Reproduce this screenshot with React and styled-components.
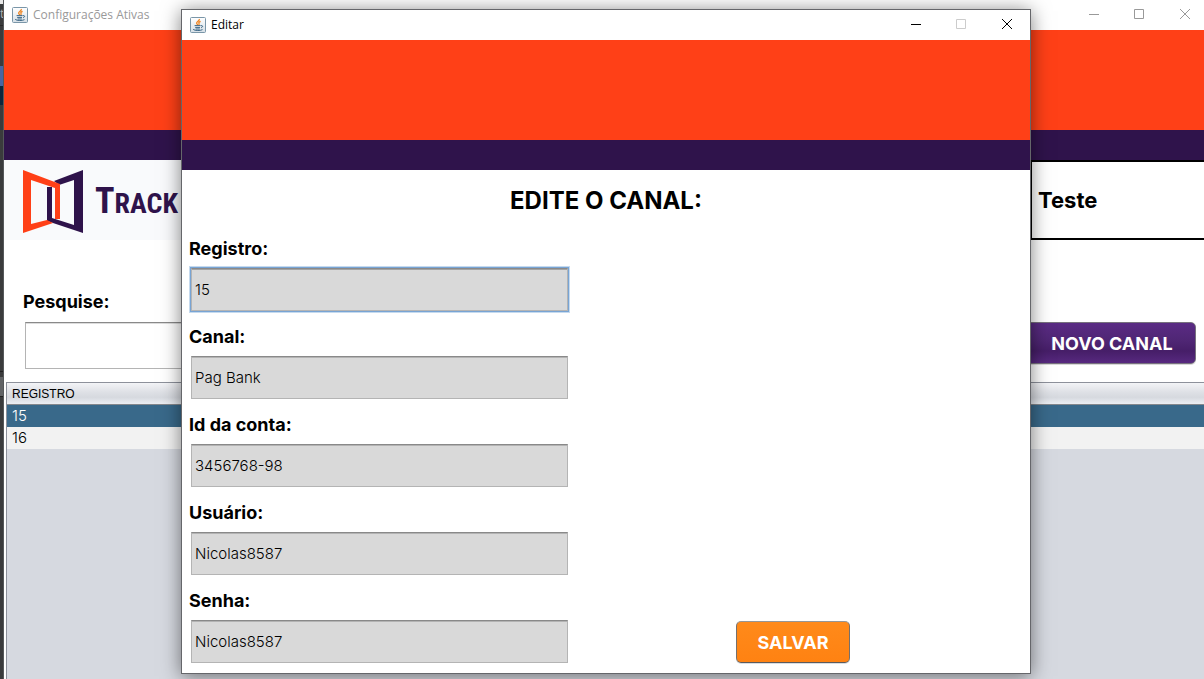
import React from "react";
import styled, { createGlobalStyle, css } from "styled-components";

const GlobalStyle = createGlobalStyle`
  *, *::before, *::after { box-sizing: border-box; }
  body {
    margin: 0;
    background: #ffffff;
    color: #000000;
    font-family: Inter, "Liberation Sans", sans-serif;
  }
`;

const Desktop = styled.div`
  position: relative;
  display: flex;
  min-height: 100vh;
  overflow: hidden;
`;

const DesktopEdge = styled.div`
  flex: 0 0 4px;
  overflow: hidden;
  display: flex;
  flex-direction: column;
  background: #3a3b3c;
  border-right: 1px solid #55585a;
  color: #b0b0b0;
  font: 12px/20px "Open Sans", sans-serif;
`;

const EdgePiece = styled.div`
  flex: 0 0 ${(p) => p.$size}px;
  background: ${(p) => p.$color || "transparent"};
`;

const MainWindow = styled.main`
  flex: 1;
  min-width: 0;
  display: flex;
  flex-direction: column;
  background: #ffffff;
`;

const TitleBar = styled.header`
  display: flex;
  align-items: center;
  height: 30px;
  padding: 0 ${(p) => (p.$active ? 15 : 11)}px 0 8px;
  background: #ffffff;
  color: ${(p) => (p.$active ? "#000000" : "#999999")};
`;

const WindowTitle = styled.span`
  flex: 1;
  margin-left: 5px;
  font: 12px/16px "Open Sans", "Noto Sans", sans-serif;
`;

const WindowButtons = styled.div`
  display: flex;
  gap: 31px;
`;

const WindowButton = styled.button`
  display: flex;
  padding: 0;
  border: 0;
  background: none;
  color: inherit;
  &:disabled { color: #cccccc; }
`;

const OrangeBand = styled.div`
  height: 100px;
  background: #ff4017;
`;

const PurpleBand = styled.div`
  height: 30px;
  background: #2f134b;
`;

const BrandRow = styled.div`
  display: flex;
  justify-content: space-between;
  height: 80px;
`;

const Brand = styled.div`
  display: flex;
  align-items: center;
  width: 300px;
  padding: 4px 0 0 18px;
  background: #f9fafc;
  svg { flex: none; }
`;

const BrandName = styled.span`
  margin-left: 11px;
  color: #2f134b;
  font: 700 36px/44px "Roboto Condensed", Roboto, sans-serif;
  small { font-size: 28px; }
`;

const UserBox = styled.div`
  display: flex;
  align-items: center;
  width: 180px;
  margin-right: -6px;
  padding-left: 6px;
  border: 2px solid #000000;
  font-size: 22px;
  font-weight: 700;
`;

const SearchRow = styled.div`
  display: flex;
  align-items: flex-end;
  justify-content: space-between;
  padding: 50px 8px 13px 19px;
`;

const SearchField = styled.div`
  display: flex;
  flex-direction: column;
  gap: 8px;
  width: 50%;
`;

const Label = styled.label`
  font-size: 18px;
  line-height: 24px;
  font-weight: 700;
`;

const TextInput = styled.input`
  width: calc(100% - 4px);
  margin: 0 2px;
  height: ${(p) => (p.$plain ? 47 : 43)}px;
  padding: 0 3px;
  border: 1px solid #b4b4b4;
  border-top-color: #898989;
  border-radius: 0;
  outline: 0;
  background: ${(p) => (p.$plain ? "#ffffff" : "#d9d9d9")};
  box-shadow: inset 0 1px 0 ${(p) => (p.$plain ? "#dcdcdc" : "#b3b3b3")};
  color: #000000;
  font: 300 15px/20px Inter, sans-serif;
  ${(p) =>
    p.$focused &&
    css`
      box-shadow: inset 0 1px 0 #a4a4a4, 0 0 0 1px #78a4d4, 0 0 0 2px #c6daee;
    `}
`;

const Button = styled.button`
  flex: none;
  height: 42px;
  padding: 2px 0 0;
  border: 1px solid;
  border-radius: 5px;
  color: #ffffff;
  font: 700 18px/24px Inter, sans-serif;
`;

const NewButton = styled(Button)`
  width: 172px;
  margin-bottom: 5px;
  padding-left: 4px;
  border-color: #77717e;
  background: linear-gradient(#5a2b84, #4f2674 45%, #461e68 70%, #57297f);
  box-shadow: 0 1px 0 #d8d8d8;
`;

const SaveButton = styled(Button)`
  width: 114px;
  border-color: #969696 #76706b #5c5a5c;
  background: linear-gradient(#ff8a1a, #ff8212);
  box-shadow: 0 1px 0 #d8dde2;
`;

const TablePanel = styled.section`
  flex: 1;
  margin-left: 2px;
  border: solid #8d919b;
  border-width: 1px 0 0 1px;
  background: #d6d9e0;
`;

const Table = styled.table`
  width: 100%;
  border-collapse: collapse;
  table-layout: fixed;
`;

const HeadCell = styled.th`
  height: 22px;
  padding: 0 5px;
  background: linear-gradient(#f3f4f7, #dfe1e6 40%, #d6d9df 65%, #eff2f6);
  box-shadow: inset 0 -1px 0 #85888d;
  text-align: left;
  font: 12px/20px "Liberation Sans", Arial, sans-serif;
`;

const Row = styled.tr`
  background: ${(p) => (p.$selected ? "#39698a" : "#f2f2f2")};
  color: ${(p) => (p.$selected ? "#ffffff" : "#000000")};
`;

const Cell = styled.td`
  height: 22px;
  padding: 0 5px;
  font-size: 15px;
  line-height: 22px;
  font-weight: 300;
`;

const Dialog = styled.section`
  position: absolute;
  top: 9px;
  left: 181px;
  right: 173px;
  border: 1px solid #65666a;
  background: #ffffff;
  box-shadow: 0 2px 18px rgba(0, 0, 0, 0.5);
`;

const DialogTitle = styled.h1`
  margin: 0;
  padding: 1px 0 6px;
  text-align: center;
  font-size: 24px;
  line-height: 60px;
  font-weight: 700;
`;

const Form = styled.form`
  display: flex;
  align-items: flex-end;
  justify-content: space-between;
  padding: 0 180px 10px 7px;
`;

const Fields = styled.div`
  display: flex;
  flex-direction: column;
  gap: 14px;
  width: 381px;
`;

const Field = styled.div`
  display: flex;
  flex-direction: column;
  gap: 7px;
`;

function JavaIcon() {
  return (
    <svg width="16" height="16" viewBox="0 0 16 16" aria-hidden="true">
      <defs>
        <linearGradient id="javaTile" x1="0" y1="0" x2="0" y2="1">
          <stop offset="0" stopColor="#ffffff" />
          <stop offset="1" stopColor="#d5dfe6" />
        </linearGradient>
      </defs>
      <rect x=".5" y=".5" width="15" height="15" rx="1" fill="url(#javaTile)" stroke="#7a96a8" />
      <path d="M9.3 2c.8 1.8-3.4 2.6-2.6 4.4.3.7.9.9 1 1.6M10.6 4.4C8.8 5.1 8.5 5.7 9 6.4c.4.5.2.9-.2 1.4" fill="none" stroke="#ef8420" strokeWidth="1.3" />
      <path d="M4.6 8.6h6M5.2 10.4h4.8M11 8.7c2.2-.5 2.1 1.5.1 2M5.6 12h4.2M3.2 12.4c1.7 1.5 7.4 1.4 9.3.2" fill="none" stroke="#3b6685" />
    </svg>
  );
}

function BrandMark() {
  return (
    <svg width="62" height="66" viewBox="0 0 62 66" aria-hidden="true">
      <path d="M32 12 61 1v63L25 52V18h5v31l22 7V11l-15 5z" fill="#2f134b" />
      <path d="M1 1 38 15v35h-5V19L9 11v44l16-4 6 3L1 64z" fill="#ff4017" />
    </svg>
  );
}

const glyphs = {
  Minimizar: "M3 7.5h10",
  Maximizar: "M2.5 2.5h9v9h-9z",
  Fechar: "M2 2l10 10M12 2L2 12",
};

function Controls({ locked }) {
  return (
    <WindowButtons>
      {Object.entries(glyphs).map(([name, path]) => (
        <WindowButton
          key={name}
          type="button"
          aria-label={name}
          disabled={locked && name === "Maximizar"}
        >
          <svg width="15" height="16" viewBox="0 0 15 16">
            <path d={path} fill="none" stroke="currentColor" />
          </svg>
        </WindowButton>
      ))}
    </WindowButtons>
  );
}

const fields = [
  { id: "registro", label: "Registro:", value: "15", focused: true },
  { id: "canal", label: "Canal:", value: "Pag Bank" },
  { id: "conta", label: "Id da conta:", value: "3456768-98" },
  { id: "usuario", label: "Usuário:", value: "Nicolas8587" },
  { id: "senha", label: "Senha:", value: "Nicolas8587" },
];

export default function App() {
  return (
    <Desktop>
      <GlobalStyle />
      <DesktopEdge>
        <EdgePiece $size={4} $color="#e8e8e8" />
        <EdgePiece $size={21}>t</EdgePiece>
        <EdgePiece $size={1} $color="#282828" />
        <EdgePiece $size={40} />
        <EdgePiece $size={20} $color="#4965a3" />
        <EdgePiece $size={19} $color="#0c273d" />
        <EdgePiece $size={266} />
        <EdgePiece $size={1} $color="#202020" />
        <EdgePiece $size={5} />
        <EdgePiece $size={19} $color="#616365" />
        <EdgePiece $size={1} $color="#202020" />
      </DesktopEdge>

      <MainWindow>
        <TitleBar>
          <JavaIcon />
          <WindowTitle>Configurações Ativas</WindowTitle>
          <Controls />
        </TitleBar>
        <OrangeBand />
        <PurpleBand />
        <BrandRow>
          <Brand>
            <BrandMark />
            <BrandName>T<small>RACK</small></BrandName>
          </Brand>
          <UserBox>Teste</UserBox>
        </BrandRow>
        <SearchRow>
          <SearchField>
            <Label htmlFor="pesquise">Pesquise:</Label>
            <TextInput id="pesquise" $plain />
          </SearchField>
          <NewButton type="button">NOVO CANAL</NewButton>
        </SearchRow>
        <TablePanel>
          <Table>
            <thead>
              <tr><HeadCell scope="col">REGISTRO</HeadCell></tr>
            </thead>
            <tbody>
              <Row $selected><Cell>15</Cell></Row>
              <Row><Cell>16</Cell></Row>
            </tbody>
          </Table>
        </TablePanel>
      </MainWindow>

      <Dialog role="dialog" aria-label="Editar">
        <TitleBar $active>
          <JavaIcon />
          <WindowTitle>Editar</WindowTitle>
          <Controls locked />
        </TitleBar>
        <OrangeBand />
        <PurpleBand />
        <DialogTitle>EDITE O CANAL:</DialogTitle>
        <Form>
          <Fields>
            {fields.map((f) => (
              <Field key={f.id}>
                <Label htmlFor={f.id}>{f.label}</Label>
                <TextInput id={f.id} defaultValue={f.value} $focused={f.focused} />
              </Field>
            ))}
          </Fields>
          <SaveButton type="button">SALVAR</SaveButton>
        </Form>
      </Dialog>
    </Desktop>
  );
}
